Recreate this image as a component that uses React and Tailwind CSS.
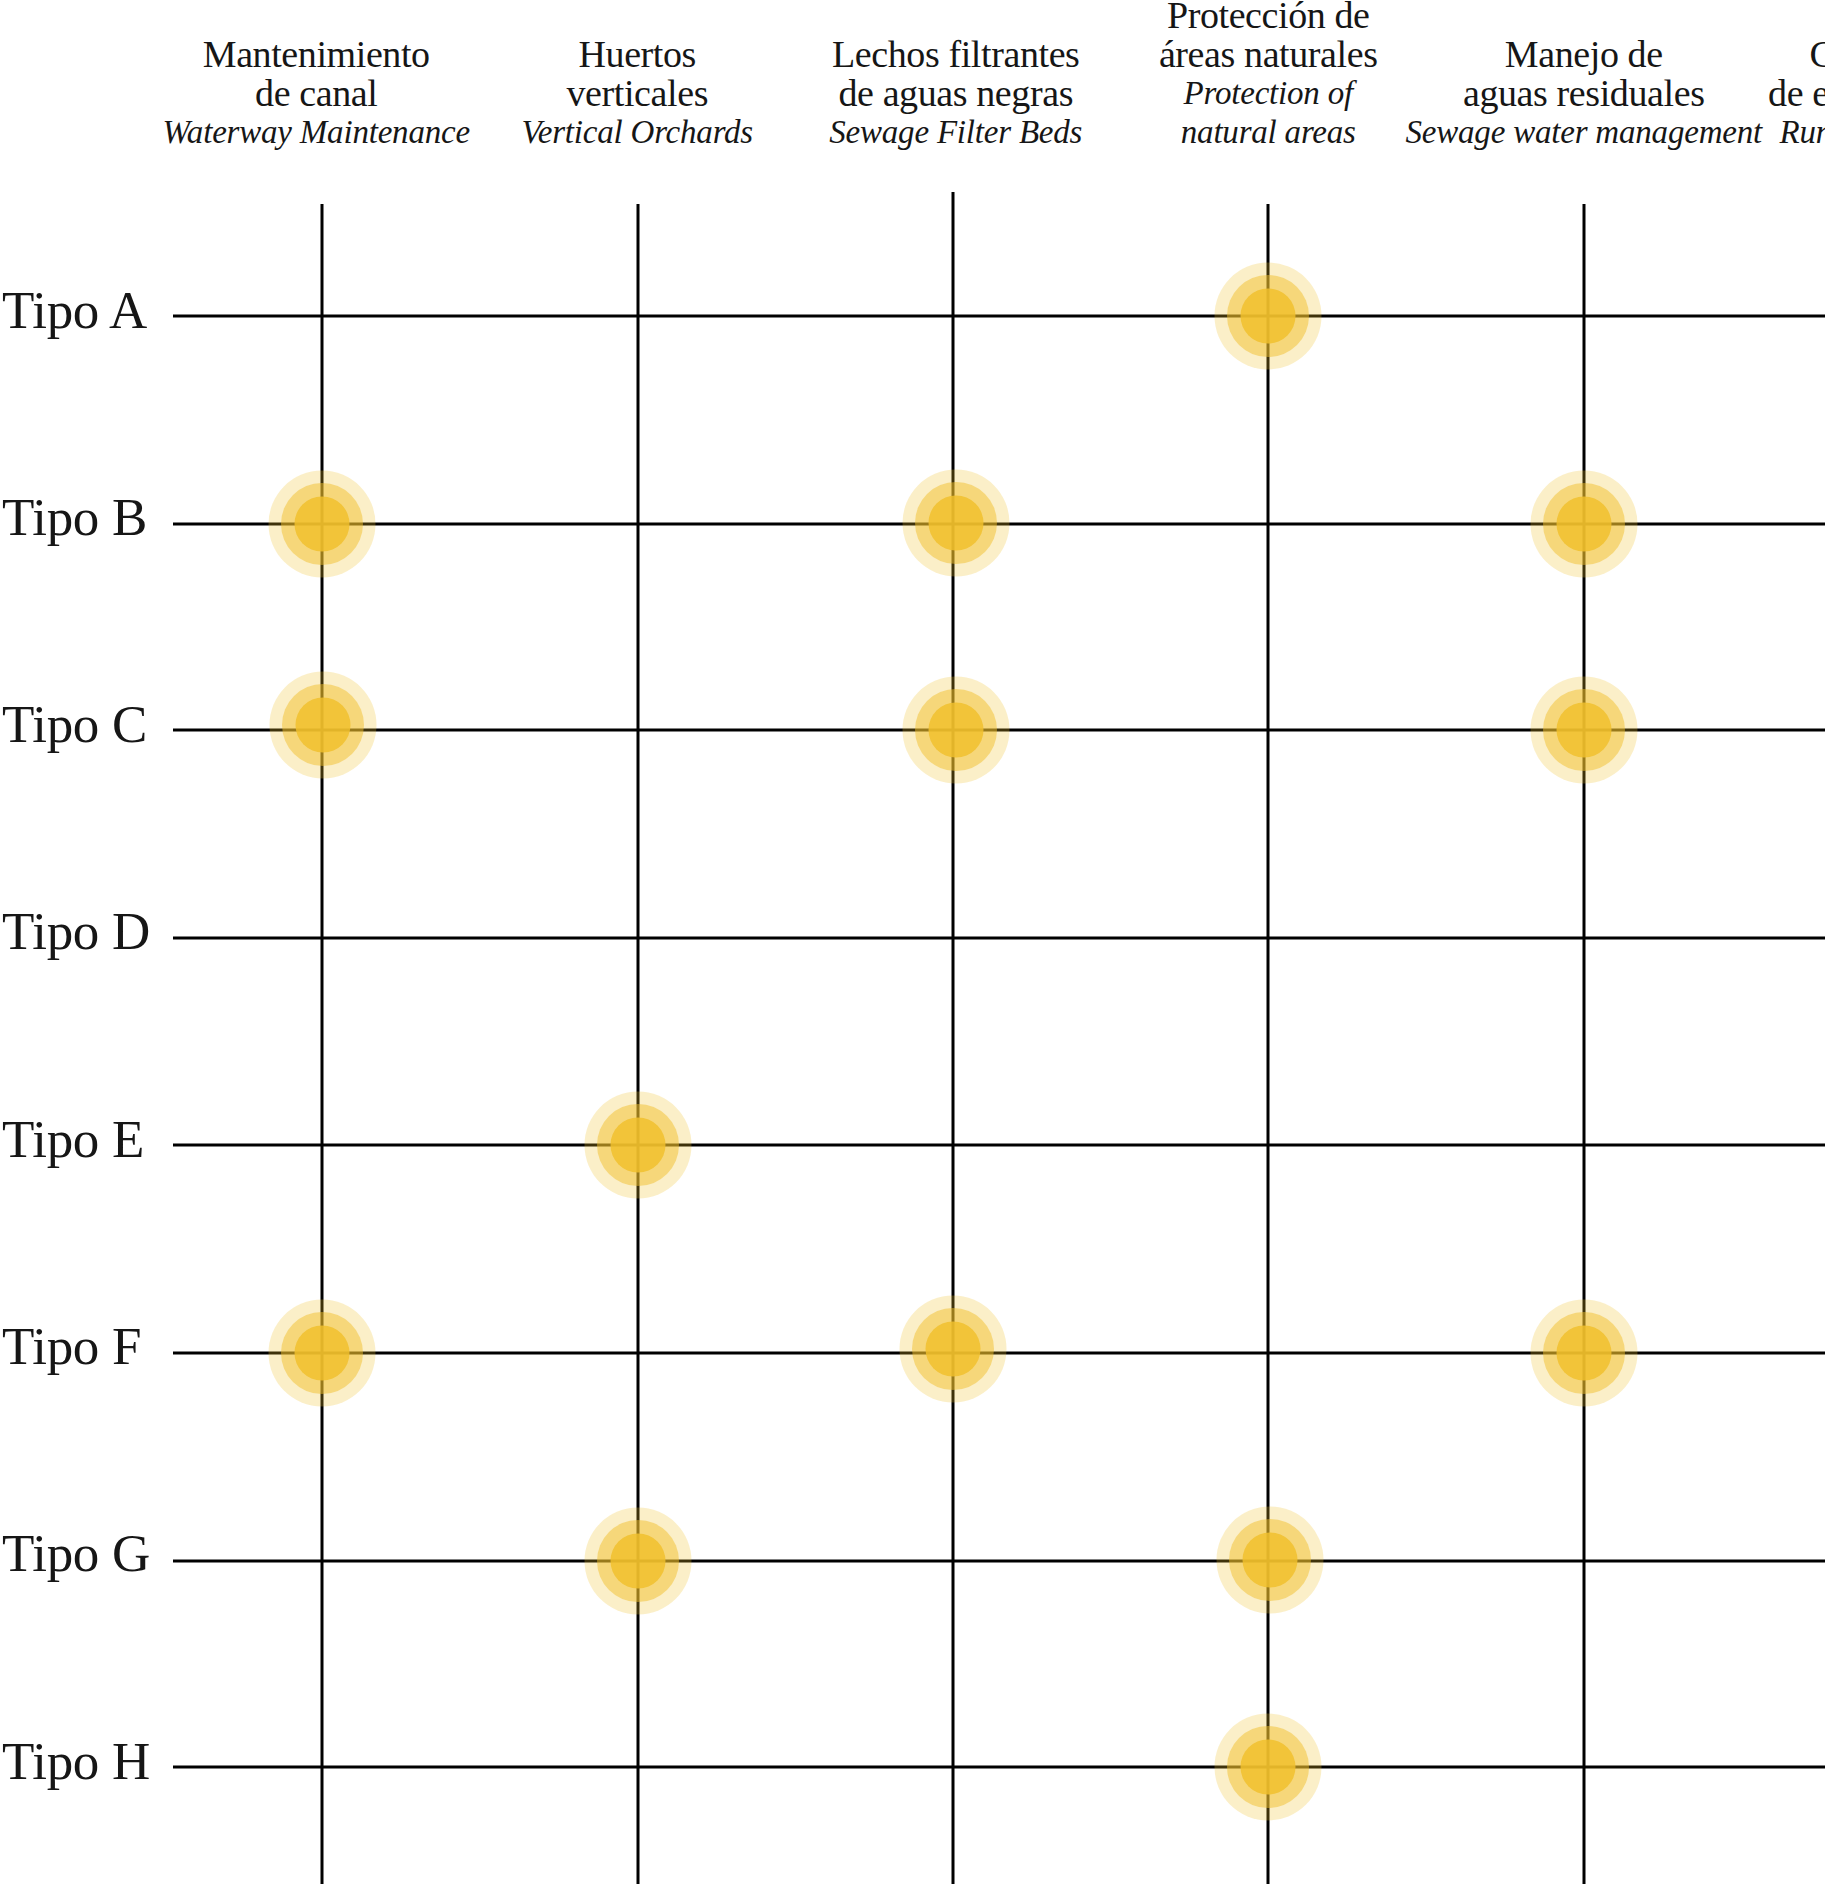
import React from "react";

const columns = [
  { es: ["Mantenimiento", "de canal"], en: ["Waterway Maintenance"], shift: "pr-[11px]" },
  { es: ["Huertos", "verticales"], en: ["Vertical Orchards"], shift: "" },
  { es: ["Lechos filtrantes", "de aguas negras"], en: ["Sewage Filter Beds"], shift: "pl-[6px]" },
  { es: ["Protección de", "áreas naturales"], en: ["Protection of", "natural areas"], shift: "" },
  { es: ["Manejo de", "aguas residuales"], en: ["Sewage water management"], shift: "" },
  { es: ["Conducción", "de escurrimientos"], en: ["Runoff conduction"], shift: "" },
];

const rows = ["A", "B", "C", "D", "E", "F", "G", "H"];

// chart coordinates, relative to the grid area (x 173, y 192 on the page)
const colX = [149, 465, 780, 1095, 1411, 1726];
const colTop = [12, 12, 0, 12, 12, 12];
const rowY = [124, 332, 538, 746, 953, 1161, 1369, 1575];

const dots = [
  [1095, 124],
  [149, 332],
  [783, 331],
  [1411, 332],
  [150, 533],
  [783, 538],
  [1411, 538],
  [465, 953],
  [149, 1161],
  [780, 1157],
  [1411, 1161],
  [465, 1369],
  [1097, 1368],
  [1095, 1575],
];

const Dot = ({ x, y }) => (
  <g fill="#f1c02c">
    <circle cx={x} cy={y} r="53.5" opacity="0.26" />
    <circle cx={x} cy={y} r="41" opacity="0.5" />
    <circle cx={x} cy={y} r="27.5" opacity="0.84" />
  </g>
);

const App = () => {
  return (
    <div className="w-[1825px] h-[1884px] overflow-hidden bg-white text-[#161616] font-['Liberation_Serif','DejaVu_Serif',serif]">
      <div className="flex h-[192px] pb-[40px]">
        <div className="w-[164px] flex-none" />
        {columns.map((col, i) => (
          <div
            key={i}
            className={`w-[315.5px] flex-none flex flex-col justify-end items-center text-center whitespace-nowrap ${col.shift}`}
          >
            {col.es.map((line) => (
              <div key={line} className="text-[38px] leading-[39px] tracking-[-0.4px]">
                {line}
              </div>
            ))}
            {col.en.map((line) => (
              <div key={line} className="text-[33px] leading-[39px] italic tracking-[-0.2px]">
                {line}
              </div>
            ))}
          </div>
        ))}
      </div>

      <div className="flex">
        <div className="w-[173px] flex-none flex flex-col pt-[91.5px] gap-[154.3px]">
          {rows.map((r) => (
            <div key={r} className="h-[53px] pl-[2px] text-[53px] leading-[53px] tracking-[-0.3px] whitespace-nowrap">
              Tipo {r}
            </div>
          ))}
        </div>

        <svg width="1652" height="1692" className="flex-none block">
          {rowY.map((y) => (
            <line key={y} x1="0" y1={y} x2="1652" y2={y} stroke="#000" strokeWidth="3" />
          ))}
          {colX.map((x, i) => (
            <line key={x} x1={x} y1={colTop[i]} x2={x} y2="1692" stroke="#000" strokeWidth="3" />
          ))}
          {dots.map(([x, y], i) => (
            <Dot key={i} x={x} y={y} />
          ))}
        </svg>
      </div>
    </div>
  );
};

export default App;
